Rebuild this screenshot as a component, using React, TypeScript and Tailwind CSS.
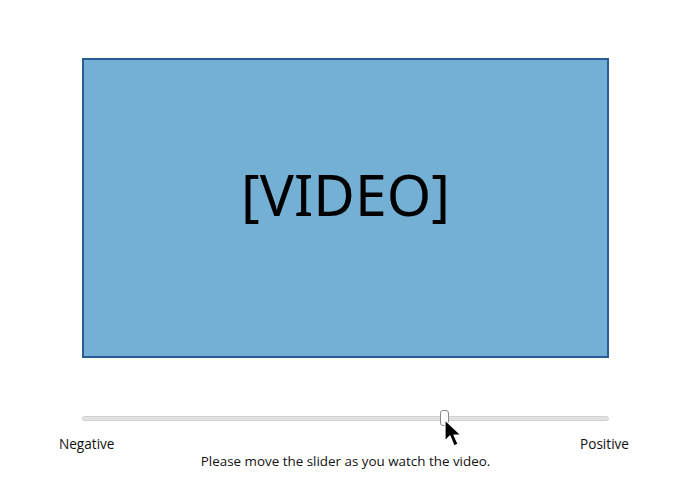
export default function App() {
  const value = 0.69;

  return (
    <div className="w-[694px] h-[486px] bg-white overflow-hidden relative" style={{ fontFamily: '"Open Sans", sans-serif' }}>
      <div className="pt-[58px] pl-[82px]">
        {/* Video placeholder */}
        <div className="w-[527px] h-[300px] bg-[#74afd4] border-2 border-[#2c5b9a] flex items-center justify-center">
          <span className="text-[57px] leading-none text-black -mt-[28px] font-['Noto_Sans',sans-serif]">[VIDEO]</span>
        </div>

        {/* Slider */}
        <div className="w-[527px] mt-[52px] relative h-[16px] flex items-center">
          <div className="w-full h-[5px] rounded-full bg-[#e2e2e2] border border-[#d0d0d0]" />
          <div
            className="absolute top-0 w-[9px] h-[16px] rounded-[3px] bg-white border border-[#8a8a8a]"
            style={{ left: `${value * 527 - 6}px` }}
          />
        </div>
      </div>

      {/* Labels */}
      <div className="w-[570px] ml-[59px] mt-[11px] flex justify-between text-[13.6px] text-[#111] leading-none">
        <span>Negative</span>
        <span>Positive</span>
      </div>
      <div className="w-[527px] ml-[82px] mt-[4px] text-center text-[13.4px] text-[#111] leading-none">
        Please move the slider as you watch the video.
      </div>

      {/* Mouse cursor */}
      <svg className="absolute left-[444px] top-[419px]" width="20" height="30" viewBox="0 0 20 30">
        <path d="M1 1 L1 22 L6 17 L10 27 L14 25 L10 16 L17 16 Z" fill="#000" stroke="#fff" strokeWidth="1.2" strokeLinejoin="round" />
      </svg>
    </div>
  );
}
